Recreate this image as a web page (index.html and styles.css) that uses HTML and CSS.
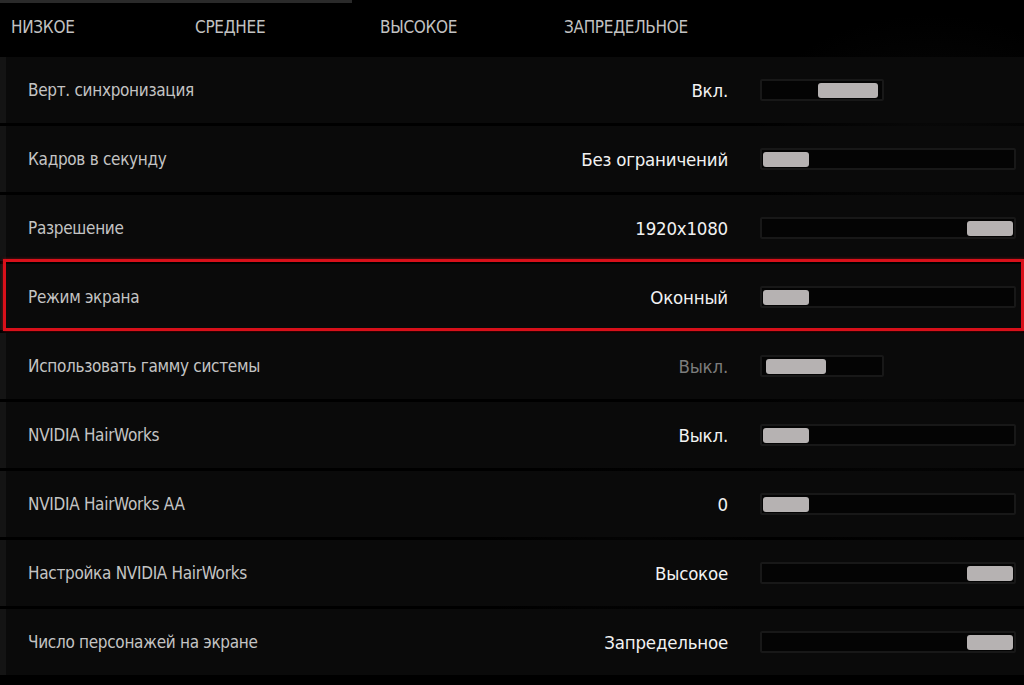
FILE: index.html
```html
<!DOCTYPE html>
<html lang="ru">
<head>
<meta charset="utf-8">
<title>Настройки графики</title>
<link rel="stylesheet" href="styles.css">
</head>
<body>
<div class="screen">
  <div class="topline"></div>
  <nav class="tabs">
    <span class="tab t1">НИЗКОЕ</span>
    <span class="tab t2">СРЕДНЕЕ</span>
    <span class="tab t3">ВЫСОКОЕ</span>
    <span class="tab t4">ЗАПРЕДЕЛЬНОЕ</span>
  </nav>
  <div class="rows">
    <div class="row">
      <span class="label">Верт. синхронизация</span>
      <span class="value">Вкл.</span>
      <div class="slot"><div class="track short end"><div class="thumb wide"></div></div></div>
    </div>
    <div class="row">
      <span class="label">Кадров в секунду</span>
      <span class="value">Без ограничений</span>
      <div class="slot"><div class="track"><div class="thumb"></div></div></div>
    </div>
    <div class="row">
      <span class="label">Разрешение</span>
      <span class="value">1920x1080</span>
      <div class="slot"><div class="track end"><div class="thumb"></div></div></div>
    </div>
    <div class="row selected">
      <span class="label">Режим экрана</span>
      <span class="value">Оконный</span>
      <div class="slot"><div class="track"><div class="thumb"></div></div></div>
    </div>
    <div class="row">
      <span class="label">Использовать гамму системы</span>
      <span class="value disabled">Выкл.</span>
      <div class="slot"><div class="track short"><div class="thumb wide inset"></div></div></div>
    </div>
    <div class="row">
      <span class="label">NVIDIA HairWorks</span>
      <span class="value">Выкл.</span>
      <div class="slot"><div class="track"><div class="thumb"></div></div></div>
    </div>
    <div class="row">
      <span class="label">NVIDIA HairWorks AA</span>
      <span class="value">0</span>
      <div class="slot"><div class="track"><div class="thumb"></div></div></div>
    </div>
    <div class="row">
      <span class="label">Настройка NVIDIA HairWorks</span>
      <span class="value">Высокое</span>
      <div class="slot"><div class="track end"><div class="thumb"></div></div></div>
    </div>
    <div class="row">
      <span class="label">Число персонажей на экране</span>
      <span class="value">Запредельное</span>
      <div class="slot"><div class="track end"><div class="thumb"></div></div></div>
    </div>
  </div>
</div>
</body>
</html>
```
FILE: styles.css
```css
html, body {
  margin: 0;
  padding: 0;
  background: #000;
}
body {
  width: 1024px;
  height: 685px;
  overflow: hidden;
  font-family: "DejaVu Sans Condensed", "Liberation Sans", sans-serif;
  color: #c4c4c4;
}
.screen {
  width: 1024px;
  height: 685px;
  background:
    radial-gradient(ellipse 260px 180px at 930px 140px, rgba(60,60,60,0.14), transparent 70%),
    radial-gradient(ellipse 240px 200px at 900px 420px, rgba(60,60,60,0.10), transparent 70%),
    radial-gradient(ellipse 200px 160px at 620px 560px, rgba(50,50,50,0.08), transparent 70%),
    #000;
}
.topline {
  width: 352px;
  height: 3px;
  background: #2a2a2a;
}
.tabs {
  display: flex;
  height: 54px;
  align-items: center;
  box-sizing: border-box;
  padding-left: 11px;
}
.tab {
  font-size: 17px;
  letter-spacing: -0.3px;
  color: #c2c2c2;
  line-height: 1;
  margin-top: -6px;
}
.t1 { width: 184px; }
.t2 { width: 185px; }
.t3 { width: 184px; }
.rows {
  display: flex;
  flex-direction: column;
  gap: 3px;
}
.row {
  position: relative;
  height: 66px;
  display: flex;
  align-items: center;
  box-sizing: border-box;
  padding-left: 22px;
  border-left: 6px solid #141414;
  background: rgba(11,11,11,0.9);
}
.row.selected::after {
  content: "";
  position: absolute;
  top: -5px;
  bottom: -1px;
  left: -3px;
  right: 0;
  border: 3px solid #d8101a;
  box-shadow: 0 0 3px rgba(216,16,26,0.5);
  pointer-events: none;
}
.label {
  flex: 1;
  font-size: 17px;
  letter-spacing: -0.3px;
  color: #c4c4c4;
}
.value {
  font-size: 18.5px;
  letter-spacing: -0.2px;
  color: #f2f2f2;
  text-align: right;
  margin-right: 32px;
}
.value.disabled { color: #7c7c7c; }
.slot {
  width: 256px;
  margin-right: 8px;
  display: flex;
}
.track {
  width: 256px;
  height: 22px;
  box-sizing: border-box;
  border: 2px solid #181818;
  border-radius: 2px;
  background: #040404;
  display: flex;
  align-items: center;
  padding: 0 1px;
}
.track.short { width: 124px; }
.track.end { justify-content: flex-end; }
.thumb {
  width: 46px;
  height: 15px;
  border-radius: 3px;
  background: #b6b2b2;
}
.thumb.wide { width: 60px; }
.track.short.end { padding-right: 4px; }
.thumb.inset { margin-left: 3px; }
```
